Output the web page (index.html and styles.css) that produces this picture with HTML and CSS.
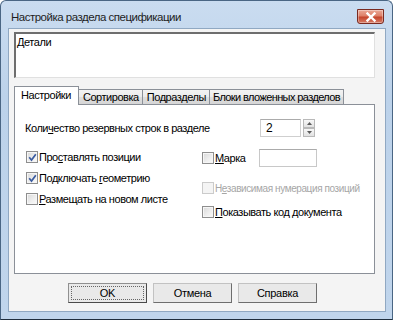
FILE: index.html
```html
<!DOCTYPE html>
<html lang="ru">
<head>
<meta charset="utf-8">
<title>Настройка раздела спецификации</title>
<link rel="stylesheet" href="styles.css">
</head>
<body>
<div class="window">
  <div class="titlebar">
    <span class="title">Настройка раздела спецификации</span>
    <span class="close">
      <svg width="12" height="10" viewBox="0 0 12 10"><path d="M2.5 1.5 L9.5 8.5 M9.5 1.5 L2.5 8.5" stroke="#fff" stroke-width="2.4" stroke-linecap="square"/></svg>
    </span>
  </div>
  <div class="client">
    <div class="memo">Детали</div>
    <div class="tabs">
      <div class="tabstrip">
        <span class="tab active">Настройки</span>
        <span class="tab">Сортировка</span>
        <span class="tab">Подразделы</span>
        <span class="tab last">Блоки вложенных разделов</span>
      </div>
      <div class="pane">
        <div class="row-count">
          <span class="count-label">Коли<u>ч</u>ество резервных строк в разделе</span>
          <span class="spin">
            <span class="spin-field">2</span>
            <span class="spin-btns">
              <span class="spin-btn"><svg width="5" height="3" viewBox="0 0 5 3"><path d="M0 3 L2.5 0 L5 3Z" fill="#5a5a5a"/></svg></span>
              <span class="spin-btn"><svg width="5" height="3" viewBox="0 0 5 3"><path d="M0 0 L2.5 3 L5 0Z" fill="#5a5a5a"/></svg></span>
            </span>
          </span>
        </div>
        <div class="cols">
          <div class="col-left">
            <label class="cb"><span class="box checked"><svg width="9" height="9" viewBox="0 0 9 9"><path d="M1.2 4.2 L3.5 7 L7.8 1.2" fill="none" stroke="#3b5ca0" stroke-width="1.7"/></svg></span><span class="lbl">Про<u>с</u>тавлять позиции</span></label>
            <label class="cb"><span class="box checked"><svg width="9" height="9" viewBox="0 0 9 9"><path d="M1.2 4.2 L3.5 7 L7.8 1.2" fill="none" stroke="#3b5ca0" stroke-width="1.7"/></svg></span><span class="lbl">Подключать <u>г</u>еометрию</span></label>
            <label class="cb"><span class="box"></span><span class="lbl"><u>Р</u>азмещать на новом листе</span></label>
          </div>
          <div class="col-right">
            <div class="mark-row">
              <label class="cb mark-cb"><span class="box"></span><span class="lbl"><u>М</u>арка</span></label>
              <span class="field"></span>
            </div>
            <label class="cb disabled indep"><span class="box"></span><span class="lbl">Н<u>е</u>зависимая нумерация позиций</span></label>
            <label class="cb code"><span class="box"></span><span class="lbl"><u>П</u>оказывать код документа</span></label>
          </div>
        </div>
      </div>
    </div>
    <div class="buttons">
      <span class="btn default"><span class="focus">OK</span></span>
      <span class="btn">Отмена</span>
      <span class="btn">Справка</span>
    </div>
  </div>
</div>
</body>
</html>
```
FILE: styles.css
```css
* { box-sizing: border-box; }
html, body { margin: 0; padding: 0; background: #ffffff; }
body { width: 393px; height: 320px; overflow: hidden; }

.window {
  width: 393px;
  height: 320px;
  border: 1px solid #4a6684;
  border-bottom-color: #1f2e3d;
  border-radius: 6px 6px 0 0;
  background: linear-gradient(to bottom, #cadcf0 0%, #bcd2ea 30%, #c0d5ec 100%);
  padding: 0 6px 7px 7px;
  display: flex;
  flex-direction: column;
}

.titlebar {
  height: 27px;
  display: flex;
  align-items: flex-start;
  justify-content: space-between;
  flex: none;
}
.title {
  font-family: "Liberation Sans", Arial, sans-serif;
  font-size: 11.5px;
  letter-spacing: -0.5px;
  color: #1e1e1e;
  padding-left: 3px;
  margin-top: 9px;
  line-height: 14px;
}
.close {
  width: 27px;
  height: 15px;
  margin-top: 8px;
  margin-right: 2px;
  border: 1px solid #7a2a20;
  border-radius: 0 0 3px 3px;
  background: linear-gradient(to bottom, #eba896 0%, #dd8069 45%, #c5452c 55%, #d67c66 100%);
  display: flex;
  align-items: center;
  justify-content: center;
  box-shadow: inset 0 0 0 1px rgba(255,255,255,0.35);
}

.client {
  flex: 1;
  background: #f4f4f4;
  border: 1px solid #90a8c2;
  padding: 3px 10px 0 5px;
  display: flex;
  flex-direction: column;
  font-family: "Liberation Sans", Arial, sans-serif;
  font-size: 11px;
  letter-spacing: -0.45px;
  color: #000;
}

.memo {
  height: 46px;
  background: #fff;
  border-top: 2px solid #6e6e6e;
  border-left: 2px solid #6e6e6e;
  border-right: 1px solid #e0e0e0;
  border-bottom: 1px solid #e0e0e0;
  padding: 2px 0 0 1px;
  line-height: 13px;
}

.tabs { margin-top: 8px; }
.tabstrip {
  display: flex;
  align-items: flex-end;
  height: 18px;
  position: relative;
  z-index: 1;
}
.tab {
  height: 15px;
  padding: 0 3px 0 4px;
  border: 1px solid #8b9098;
  border-bottom: none;
  background: linear-gradient(to bottom, #f3f3f3 0%, #ebebeb 50%, #dedede 51%, #d6d6d6 100%);
  margin-left: -1px;
  line-height: 14px;
  white-space: nowrap;
}
.tab.last { letter-spacing: -0.6px; padding: 0 3px 0 3px; }
.tab.active {
  height: 19px;
  background: #fff;
  margin-left: 0;
  margin-right: -1px;
  margin-bottom: -1px;
  padding: 1px 7px 0 6px;
  line-height: 15px;
  position: relative;
  z-index: 2;
}
.tab:nth-child(2) { margin-left: 0; }

.pane {
  height: 170px;
  background: #fff;
  border: 1px solid #8b9098;
  padding: 14px 10px 0 10px;
}

.row-count {
  display: flex;
  align-items: center;
  height: 18px;
}
.count-label { width: 235px; flex: none; }
.spin { display: flex; height: 18px; }
.spin-field {
  width: 41px;
  height: 18px;
  border: 1px solid #cfcfcf;
  border-top-color: #ababab;
  padding: 2px 0 0 5px;
  font-size: 12px;
  line-height: 13px;
  background: #fff;
}
.spin-btns {
  display: flex;
  flex-direction: column;
  margin-left: 2px;
}
.spin-btn {
  width: 12px;
  height: 9px;
  border: 1px solid #b9b9b9;
  background: linear-gradient(to bottom, #f8f8f8, #e2e2e2);
  display: flex;
  align-items: center;
  justify-content: center;
}

.cols {
  display: flex;
  margin-top: 12px;
}
.col-left {
  flex: none;
  width: 177px;
  display: flex;
  flex-direction: column;
  gap: 5px;
  padding-left: 1px;
}
.col-right {
  flex: none;
  display: flex;
  flex-direction: column;
}
.cb {
  display: flex;
  align-items: center;
  height: 16px;
  white-space: nowrap;
}
.lbl { white-space: pre; }
.box {
  width: 12px;
  height: 12px;
  border: 1px solid #8e8e8e;
  background: linear-gradient(135deg, #d8d8d8 0%, #efefef 60%, #fbfbfb 100%);
  box-shadow: inset 0 0 0 1px #f6f6f6;
  margin-right: 1px;
  display: flex;
  align-items: center;
  justify-content: center;
  flex: none;
}
.cb.disabled { color: #a6a6a6; }
.cb.disabled .lbl { font-size: 10px; letter-spacing: -0.4px; }
.cb.disabled .box { border-color: #cbcbcb; background: #f4f4f4; box-shadow: none; }

.mark-row { display: flex; align-items: center; height: 18px; }
.mark-cb { width: 57px; flex: none; }
.field {
  width: 58px;
  height: 18px;
  border: 1px solid #c8c8c8;
  border-top-color: #ababab;
  background: #fff;
}
.indep { margin-top: 13px; }
.code { margin-top: 8px; }

.buttons {
  display: flex;
  gap: 6px;
  margin-top: 9px;
  padding-left: 54px;
}
.btn {
  width: 79px;
  height: 20px;
  border: 1px solid #c2c2c2;
  border-right-color: #6e6e6e;
  border-bottom-color: #6e6e6e;
  background: #e9e9e9;
  display: flex;
  align-items: center;
  justify-content: center;
  letter-spacing: -0.3px;
}
.btn.default { border-color: #909090; border-right-color: #4a4a4a; border-bottom-color: #4a4a4a; }
.focus {
  width: 73px;
  height: 14px;
  border: 1px dotted #666;
  display: flex;
  align-items: center;
  justify-content: center;
}
```
